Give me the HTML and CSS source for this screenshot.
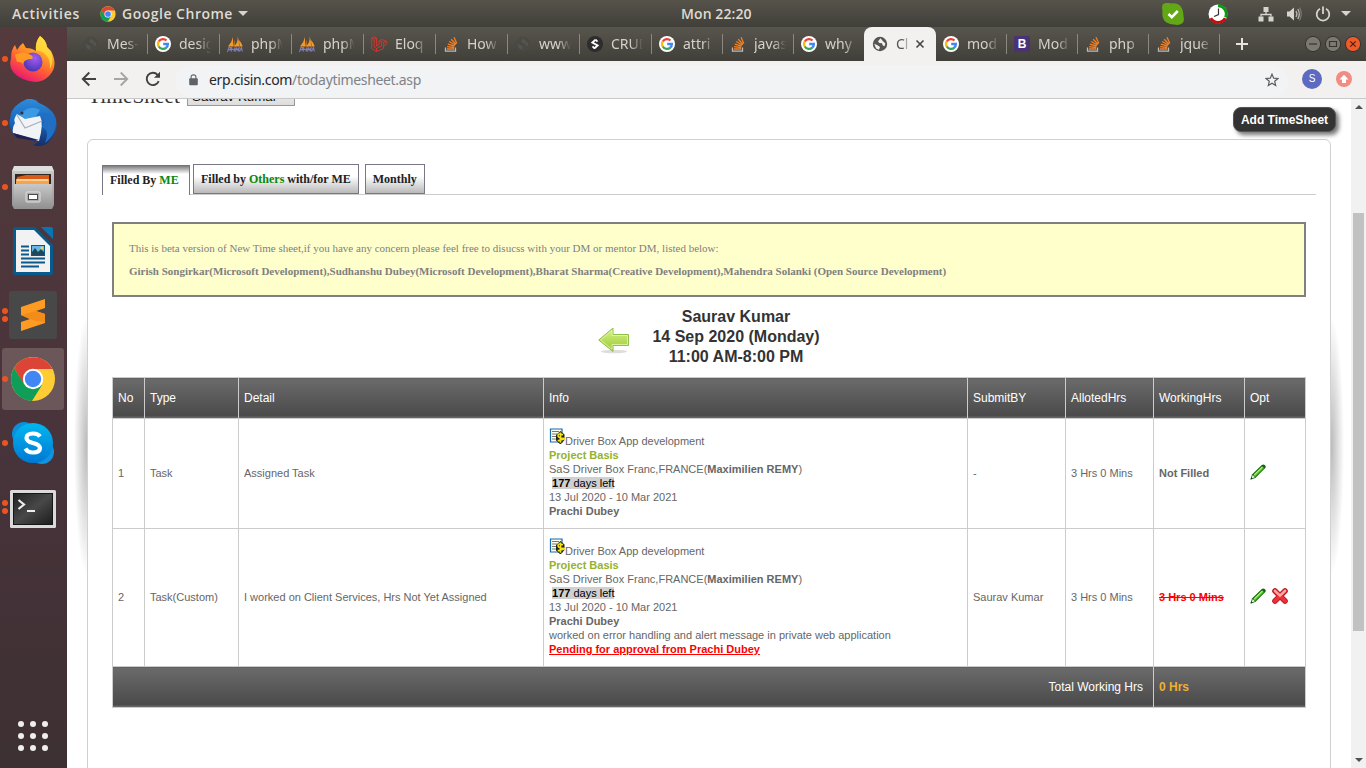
FILE: index.html
```html
<!DOCTYPE html>
<html lang="en">
<head>
<meta charset="utf-8">
<title>TimeSheet</title>
<link rel="stylesheet" href="styles.css">
</head>
<body>
<svg class="defs" width="0" height="0">
  <defs>
    <linearGradient id="fxBody" x1=".8" y1="0" x2=".3" y2="1"><stop offset="0" stop-color="#fff44f"/><stop offset=".35" stop-color="#ffa125"/><stop offset=".65" stop-color="#ff5b36"/><stop offset="1" stop-color="#e8117a"/></linearGradient>
    <radialGradient id="fxCore" cx=".6" cy=".3" r=".7"><stop offset="0" stop-color="#a35cf5"/><stop offset="1" stop-color="#4d35b5"/></radialGradient>
    <linearGradient id="tbBody" x1="0" y1="0" x2="0" y2="1"><stop offset="0" stop-color="#2f8bd8"/><stop offset=".5" stop-color="#1866bd"/><stop offset="1" stop-color="#172c66"/></linearGradient>
    <linearGradient id="steel" x1="0" y1="0" x2="0" y2="1"><stop offset="0" stop-color="#c8c8c8"/><stop offset="1" stop-color="#929292"/></linearGradient>
    <linearGradient id="skypeFill" x1="0" y1="0" x2="0" y2="1"><stop offset="0" stop-color="#00b7f0"/><stop offset="1" stop-color="#0078d4"/></linearGradient>
    <linearGradient id="termFill" x1="0" y1="0" x2="1" y2="1"><stop offset="0" stop-color="#222"/><stop offset=".5" stop-color="#484848"/><stop offset="1" stop-color="#1c1c1c"/></linearGradient>
    <linearGradient id="arrowFill" x1="0" y1="0" x2="0" y2="1"><stop offset="0" stop-color="#d9f08e"/><stop offset="1" stop-color="#98cc2c"/></linearGradient>
    <symbol id="google" viewBox="0 0 16 16"><circle cx="8" cy="8" r="8" fill="#fff"/><g fill="none" stroke-width="2.3"><path d="M11.5 4.5A4.9 4.9 0 0 0 3.8 5.5" stroke="#ea4335"/><path d="M3.8 5.4A4.9 4.9 0 0 0 3.8 10.6" stroke="#fbbc05"/><path d="M3.8 10.5A4.9 4.9 0 0 0 11.3 11.6" stroke="#34a853"/><path d="M11.2 11.7A4.9 4.9 0 0 0 12.9 8H8.2" stroke="#4285f4"/></g></symbol>
    <symbol id="pma" viewBox="0 0 16 16"><path d="M6 1Q5 6 1 10.500H6ZM10.500 0Q11.500 6 7 10.500H12Q12.500 5 10.500 0ZM12 4Q15.500 8 15.500 10.500H12.500Z" fill="#f59a2a"/><path d="M5.800 10.500Q7 6 7.500 3.500L8 10.500Z" fill="#d27a18"/><path d="M.5 15.800L2 11.500H4L3.300 13.600H1.500M5 11.500L4 15.500M5 13.500H7M8 11.500L7 15.500M8.500 15.500L9.300 12 10.300 14 12 12 11.500 15.500M12.500 15.500L14.500 11.500 15.300 15.500" fill="none" stroke="#807fb0" stroke-width="1.200"/></symbol>
    <symbol id="so" viewBox="0 0 16 16"><path d="M2.500 11.500V15.200H12.500V11.500" fill="none" stroke="#bcbbbb" stroke-width="1.300"/><path d="M4 13H11.200M4.100 10.700L11.200 11.500M4.800 8.200L11.600 10M6.200 5.500L12.300 9M8.200 3.200L13 8.300M11 1.300L13.800 7.400" stroke="#f48024" stroke-width="1.300"/></symbol>
    <symbol id="globe" viewBox="0 0 16 16"><circle cx="8" cy="8" r="7.200" fill="currentColor"/><path d="M8.500 2.300L6 5.200 7.300 7 10 7.300 10.800 9.500 12.500 10.300 13.400 7.400 11 5.300ZM2.200 7.800L5.500 9.300 8 11 7 13.700 4.100 12.600Z" fill="var(--land)"/></symbol>
    <symbol id="chrome" viewBox="0 0 46 46"><circle cx="23" cy="23" r="22" fill="#fc3"/><path d="M4 12A22 22 0 0 1 42.500 13H23L13.500 28Z" fill="#db4437"/><path d="M4 12A22 22 0 0 0 22 45L32 29 23 33 14 28Z" fill="#0f9d58"/><circle cx="23" cy="23" r="10.200" fill="#fff"/><circle cx="23" cy="23" r="8.200" fill="#4285f4"/></symbol>
    <symbol id="pencil" viewBox="0 0 16 16"><path d="M.5 15.500L2 10.500 11.800 1Q13.500-.2 15 1.300T15 4.300L5.300 14Z" fill="#15650f"/><path d="M3.500 11L12.200 2.400 14 4 5.200 12.700Z" fill="#51c92a"/><path d="M3.800 10.500L12 2.500 12.900 3.300 4.500 11.500Z" fill="#b4ef80"/><path d="M1.500 14.500L2.700 11 5 13.300Z" fill="#e9f3dd"/><path d="M.5 15.500L1.300 13.200 2.800 14.700Z" fill="#0b4208"/></symbol>
    <symbol id="cross" viewBox="0 0 16 16"><path d="M3 3L13 13M13 3L3 13" stroke="#b51c24" stroke-width="5.600" stroke-linecap="round"/><path d="M3 3L13 13M13 3L3 13" stroke="#ef3037" stroke-width="3.800" stroke-linecap="round"/><path d="M3 2.800L8 7.500 13 2.800" fill="none" stroke="#ffa9a6" stroke-width="2.400" stroke-linecap="round"/></symbol>
    <symbol id="invoice" viewBox="0 0 16 16"><path d="M1.500 1H13V14H1.500Z" fill="#fffdf0" stroke="#1768aa" stroke-width="1.200"/><path d="M3 3.500H10M3 6H8M3 8.500H7M3 11H7" stroke="#777"/><path d="M11.500 3L15.500 6.500V12L11.500 16.500 7 12.500V7Z" fill="#222"/><path d="M14 6.700Q9 5 9 7.500T14 10.300 8.700 12.700M11.500 4.500V14.800" fill="none" stroke="#f6e414" stroke-width="1.600"/></symbol>
  </defs>
</svg>

<header class="topbar">
  <span class="activities">Activities</span>
  <svg class="topbar-chrome" width="16" height="16"><use href="#chrome"/></svg>
  <span class="app-name">Google Chrome</span>
  <i class="caret"></i>
  <span class="clock">Mon 22:20</span>
  <div class="tray">
    <svg width="22" height="22" viewBox="0 0 22 22"><path d="M1 1Q5-1 9 .5Q21-1 21.500 13Q23 20 19 21Q16 22.500 12 21.500Q-1 21 .5 8Q-.5 3 1 1Z" fill="#62a715"/><path d="M6.500 11L9.800 14.200 15.800 8" fill="none" stroke="#fff" stroke-width="2.600"/></svg>
    <svg class="tray-time" width="20" height="20" viewBox="0 0 20 20"><circle cx="10" cy="10" r="9.500" fill="#fff"/><path d="M10 1.800A8.200 8.200 0 0 1 17.600 13.300" fill="none" stroke="#0b9b12" stroke-width="3"/><path d="M17.200 14.100A8.200 8.200 0 0 1 2.800 14.100" fill="none" stroke="#c80d0d" stroke-width="3"/><path d="M10.500 4.500V10.500L6 12.500" fill="none" stroke="#333" stroke-width="1.200"/></svg>
    <svg class="tray-net" width="16" height="16" viewBox="0 0 16 16" fill="#d6d4ce"><path d="M5.500 1H10.500V6H5.500ZM.5 10.500H5.500V15.500H.5ZM10.500 10.500H15.500V15.500H10.500Z"/><path d="M8 6V8.500M3 10.500V8.500H13V10.500" fill="none" stroke="#d6d4ce" stroke-width="1.300"/></svg>
    <svg class="tray-vol" width="16" height="16" viewBox="0 0 16 16"><path d="M1 5.500H3.500L8 1.500V14.500L3.500 10.500H1Z" fill="#d6d4ce"/><path d="M10 5Q11.800 8 10 11M11.800 3Q14.800 8 11.800 13" fill="none" stroke="#b9b7b0" stroke-width="1.300"/><path d="M13.500 1.500Q17 8 13.500 14.500" fill="none" stroke="#7b7972" stroke-width="1.200"/></svg>
    <svg class="tray-power" width="16" height="16" viewBox="0 0 16 16"><path d="M5 2.700A6.300 6.300 0 1 0 11 2.700M8 .5V8" fill="none" stroke="#d6d4ce" stroke-width="1.800"/></svg>
    <i class="caret tray-caret"></i>
  </div>
</header>

<div class="desktop">
  <nav class="dock">
    <div class="app"><span class="dots"><i></i></span>
      <svg width="48" height="48" viewBox="0 0 48 48"><path d="M31 1Q37 5 38 12L42 16Q50 31 40 41T14 44T2 24Q2 14 6 10L8 15Q10 11 14 8L17 13Q23 13 27 16Q26 7 31 1Z" fill="url(#fxBody)"/><path d="M31 1Q37 5 38 12Q47 22 41 34Q42 24 36 19T27 16Q26 7 31 1Z" fill="#ffdc3e" opacity=".8"/><circle cx="24" cy="27" r="9.500" fill="url(#fxCore)"/><path d="M6 20Q14 15 22 20Q25 22 23 24Q15 24 14 29Q11 26 8 27Z" fill="#ff9a22"/></svg></div>
    <div class="app"><span class="dots"><i></i></span>
      <svg width="48" height="48" viewBox="0 0 48 48"><path d="M18 0Q26-1 30 4Q41 8 46 17Q51 32 40 43Q33 49 24 46L29 43 6 38Q-1 28 1 20Q2 10 8 6Q13 2 18 0Z" fill="url(#tbBody)"/><path d="M12 15Q20 5 31 11L24 22 9 19Z" fill="#3b9ae4"/><path d="M6 24Q4 20 8 15L16 20 31 17Q35 24 30 42L4 34Q3 29 6 24Z" fill="#f2f3f7"/><path d="M8 16L16 29 33 22" fill="none" stroke="#a9afba" stroke-width="1.200"/><path d="M31 14Q41 13 47 20Q48 35 36 44Q41 31 33 28Q38 20 31 14Z" fill="#216fc2"/><path d="M4 34L30 41 22 41 8 39Z" fill="#222050"/><circle cx="13" cy="14" r="1.500" fill="#432c25"/></svg></div>
    <div class="app"><span class="dots"><i></i></span>
      <svg width="48" height="48" viewBox="0 0 48 48"><path d="M5 3H43L45 8V42H3V8Z" fill="#dedede"/><path d="M3 8H45V42L43 46H5L3 42Z" fill="url(#steel)"/><path d="M6 11H42V22H6Z" fill="#302824"/><path d="M8 14L17 12H40V22H7Z" fill="#d85b18"/><path d="M7 16H40V22H7Z" fill="#f7a34a"/><path d="M8 17H39" stroke="#ffe1ae" stroke-width="1.500"/><path d="M5 21H43V45H5Z" fill="url(#steel)"/><rect x="17" y="29" width="14" height="10" rx="1" fill="#ababab" stroke="#e2e2e2"/><rect x="19.500" y="31.500" width="9" height="5" fill="#fff" stroke="#4b4b4b"/></svg></div>
    <div class="app"><svg width="48" height="48" viewBox="0 0 48 48"><path d="M6 0H26L44 18V46Q44 48 42 48H6Q4 48 4 46V2Q4 0 6 0Z" fill="#065a8c"/><path d="M32 0H42Q44 0 44 2V12Z" fill="#0875b5"/><path d="M7 3H25L41 19V45H7Z" fill="#f2f2f2"/><path d="M12 19.500H20M12 23.500H20M12 27.500H20M12 31.500H36M12 35.500H36M12 39.500H30" stroke="#0b5a8b" stroke-width="2"/><rect x="22.500" y="18.500" width="13" height="10" fill="#69b7e3" stroke="#065a8c"/><path d="M23 28V25L26 21 29 25 32 22 35 25V28Z" fill="#20475c"/><circle cx="33" cy="21" r="1.500" fill="#f7d154"/></svg></div>
    <div class="app"><span class="dots"><i></i><i></i></span>
      <svg width="48" height="48" viewBox="0 0 48 48"><rect width="48" height="48" rx="3" fill="#484848"/><path d="M12 24V16L36 8V17L27 20 36 23V32L12 40V31L21 28Z" fill="#ff9b22"/><path d="M12 24L21 28 27 30 36 31V23L27 20Z" fill="#f48c19"/></svg></div>
    <div class="app app-active"><span class="dots"><i></i></span><svg width="48" height="46"><use href="#chrome"/></svg></div>
    <div class="app"><span class="dots"><i></i></span>
      <svg width="48" height="48" viewBox="0 0 48 48"><circle cx="15" cy="15" r="12" fill="#0a8fdc"/><circle cx="33" cy="33" r="12" fill="#1193df"/><circle cx="24" cy="24" r="20" fill="url(#skypeFill)"/><path d="M31 17.500Q29 14.500 24 14.500Q17.500 14.500 17.500 19Q17.500 22.500 24 24T31 29Q31 33.500 24 33.500Q18.500 33.500 16.500 29.500" fill="none" stroke="#fff" stroke-width="4.200"/></svg></div>
    <div class="app"><span class="dots"><i></i><i></i></span>
      <svg width="48" height="48" viewBox="0 0 48 48"><rect x="1" y="7" width="46" height="38" rx="1.500" fill="#dadada"/><rect x="4.500" y="10.500" width="39" height="31" fill="url(#termFill)" stroke="#161616"/><path d="M9.500 17L15 21.500 9.500 26M18 28H26" fill="none" stroke="#eee" stroke-width="2.200"/></svg></div>
    <div class="launcher"><i></i><i></i><i></i><i></i><i></i><i></i><i></i><i></i><i></i></div>
  </nav>

  <div class="browser">
    <div class="tabstrip">
      <div class="tab tab-first"><svg class="dim" width="16" height="16"><use href="#globe"/></svg><span>Mes-</span></div>
      <div class="tab"><svg width="16" height="16"><use href="#google"/></svg><span>desig</span></div>
      <div class="tab"><svg width="16" height="16"><use href="#pma"/></svg><span>phpM</span></div>
      <div class="tab"><svg width="16" height="16"><use href="#pma"/></svg><span>phpM</span></div>
      <div class="tab"><svg width="16" height="16" viewBox="0 0 16 16" fill="none" stroke="#d8362b" stroke-width=".9"><path d="M.7 2L3.200.7 5.500 2V10L8 8.700V5L10.700 3.500 15.300 5V8.500L12.500 10V12.700L5.500 15.500.7 12.700V2L3.200 3.300V11L5.500 12.500 10.500 10V6.700L8 5M5.500 2L3.200 3.300M15.300 5L12.700 6.500 10.500 5M12.700 6.500V9.800M5.500 12.500V15.500"/></svg><span>Eloq</span></div>
      <div class="tab"><svg width="16" height="16"><use href="#so"/></svg><span>How</span></div>
      <div class="tab"><svg class="dim" width="16" height="16"><use href="#globe"/></svg><span>www</span></div>
      <div class="tab"><svg width="16" height="16" viewBox="0 0 16 16"><circle cx="8" cy="8" r="8" fill="#2d2d2d"/><path d="M8.500 3.700L5.300 6.500 10.700 9.500 7.500 12.300M8.500 3.700L10.500 5.600M7.500 12.300L5.500 10.400" fill="none" stroke="#fff" stroke-width="1.800"/></svg><span>CRUD</span></div>
      <div class="tab tab-narrow"><svg width="16" height="16"><use href="#google"/></svg><span>attri</span></div>
      <div class="tab tab-narrow"><svg width="16" height="16"><use href="#so"/></svg><span>javas</span></div>
      <div class="tab tab-before"><svg width="16" height="16"><use href="#google"/></svg><span>why</span></div>
      <div class="tab tab-current"><svg width="16" height="16"><use href="#globe"/></svg><span>Cl</span><svg class="close" width="10" height="10" viewBox="0 0 10 10"><path d="M1.500 1.500L8.500 8.500M8.500 1.500L1.500 8.500" stroke="#444" stroke-width="1.600"/></svg></div>
      <div class="tab tab-narrow"><svg width="16" height="16"><use href="#google"/></svg><span>mod</span></div>
      <div class="tab tab-narrow"><b class="bootstrap">B</b><span>Mod</span></div>
      <div class="tab tab-narrow"><svg width="16" height="16"><use href="#so"/></svg><span>php</span></div>
      <div class="tab tab-narrow"><svg width="16" height="16"><use href="#so"/></svg><span>jque</span></div>
      <svg class="new-tab" width="12" height="12" viewBox="0 0 12 12"><path d="M6 0V12M0 6H12" stroke="#e6e4df" stroke-width="2"/></svg>
      <div class="window-buttons">
        <svg width="16" height="16" viewBox="0 0 16 16"><circle cx="8" cy="8" r="7.600" fill="#7b7970" stroke="#35342f"/><path d="M4 8H12" stroke="#35342f" stroke-width="1.200"/></svg>
        <svg width="16" height="16" viewBox="0 0 16 16"><circle cx="8" cy="8" r="7.600" fill="#7b7970" stroke="#35342f"/><path d="M4.500 5.500H11.500V10.500H4.500Z" fill="none" stroke="#35342f" stroke-width="1.200"/></svg>
        <svg width="16" height="16" viewBox="0 0 16 16"><circle cx="8" cy="8" r="7.600" fill="#ee5a2a" stroke="#35342f"/><path d="M5.300 5.300L10.700 10.700M10.700 5.300L5.300 10.700" stroke="#4c2010" stroke-width="1.200"/></svg>
      </div>
    </div>

    <div class="toolbar">
      <svg width="16" height="16" viewBox="0 0 16 16"><path d="M15 8H2M8.300 1.500L1.800 8L8.300 14.500" fill="none" stroke="#414141" stroke-width="1.900"/></svg>
      <svg class="forward" width="16" height="16" viewBox="0 0 16 16"><path d="M1 8H14M7.700 1.500L14.200 8L7.700 14.500" fill="none" stroke="#a5a5a4" stroke-width="1.900"/></svg>
      <svg class="reload" width="16" height="16" viewBox="0 0 16 16"><path d="M13.700 10.200A6.200 6.200 0 1 1 12.600 3.800" fill="none" stroke="#414141" stroke-width="1.900"/><path d="M15 .8V6.800H9Z" fill="#414141"/></svg>
      <div class="omnibox">
        <svg width="9" height="12" viewBox="0 0 10 14"><path d="M1 5H9Q10 5 10 6V12Q10 13 9 13H1Q0 13 0 12V6Q0 5 1 5Z" fill="#5f6368"/><path d="M2.200 5.500V3.500Q2.200 1 5 1T7.800 3.500V5.500" fill="none" stroke="#5f6368" stroke-width="1.300"/></svg>
        <span class="url"><b>erp.cisin.com</b>/todaytimesheet.asp</span>
        <svg class="star" width="14" height="14" viewBox="0 0 14 14"><path d="M7 1.200L8.700 5.200 13 5.500 9.700 8.300 10.700 12.500 7 10.200 3.300 12.500 4.300 8.300 1 5.500 5.300 5.200Z" fill="none" stroke="#5a5d61" stroke-width="1.200"/></svg>
      </div>
      <span class="avatar">S</span>
      <svg class="update" width="16" height="16" viewBox="0 0 16 16"><circle cx="8" cy="8" r="8" fill="#f28b82"/><path d="M8 3.700L12.500 8.500H10V12H6V8.500H3.500Z" fill="#fff"/></svg>
    </div>

    <div class="viewport">
      <main class="page">
        <div class="page-head">
          <h1>TimeSheet</h1>
          <div class="person-select">Saurav Kumar</div>
          <button class="add-button">Add TimeSheet</button>
        </div>
        <section class="panel">
          <div class="filters">
            <a class="filter filter-on">Filled By <em>ME</em></a>
            <a class="filter">Filled by <em>Others</em> with/for ME</a>
            <a class="filter filter-last">Monthly</a>
          </div>
          <div class="notice">
            <p>This is beta version of New Time sheet,if you have any concern please feel free to disucss with your DM or mentor DM, listed below:</p>
            <p><b>Girish Songirkar(Microsoft Development),Sudhanshu Dubey(Microsoft Development),Bharat Sharma(Creative Development),Mahendra Solanki (Open Source Development)</b></p>
          </div>
          <div class="day">
            <svg width="32" height="28" viewBox="0 0 32 28"><ellipse cx="16" cy="24.500" rx="13" ry="1.800" fill="#ddd"/><path d="M.7 13L15 1V7.500H30.500V18.500H15V24.500Z" fill="url(#arrowFill)" stroke="#8fc04a"/><path d="M2.500 13L14 3.500V8.500H29.500V17.500H14V22.300Z" fill="none" stroke="#e3f5b4" stroke-width=".8"/></svg>
            <div class="day-text">Saurav Kumar<br>14 Sep 2020 (Monday)<br>11:00 AM-8:00 PM</div>
          </div>
          <table class="sheet">
            <colgroup><col class="c-no"><col class="c-type"><col class="c-detail"><col class="c-info"><col class="c-submit"><col class="c-alloted"><col class="c-working"><col class="c-opt"></colgroup>
            <thead><tr><th>No</th><th>Type</th><th>Detail</th><th>Info</th><th>SubmitBY</th><th>AllotedHrs</th><th>WorkingHrs</th><th>Opt</th></tr></thead>
            <tbody>
              <tr class="row-a">
                <td>1</td><td>Task</td><td>Assigned Task</td>
                <td class="info">
                  <div class="project"><svg width="16" height="16"><use href="#invoice"/></svg>Driver Box App development</div>
                  <div class="basis">Project Basis</div>
                  <div>SaS Driver Box Franc,FRANCE(<b>Maximilien REMY</b>)</div>
                  <div>&nbsp;<span class="left"><b>177</b> days left</span></div>
                  <div>13 Jul 2020 - 10 Mar 2021</div>
                  <div><b>Prachi Dubey</b></div>
                </td>
                <td>-</td><td>3 Hrs 0 Mins</td><td><b>Not Filled</b></td>
                <td class="opts-cell"><div class="opts"><svg width="16" height="16"><use href="#pencil"/></svg></div></td>
              </tr>
              <tr class="row-b">
                <td>2</td><td>Task(Custom)</td><td>I worked on Client Services, Hrs Not Yet Assigned</td>
                <td class="info">
                  <div class="project"><svg width="16" height="16"><use href="#invoice"/></svg>Driver Box App development</div>
                  <div class="basis">Project Basis</div>
                  <div>SaS Driver Box Franc,FRANCE(<b>Maximilien REMY</b>)</div>
                  <div>&nbsp;<span class="left"><b>177</b> days left</span></div>
                  <div>13 Jul 2020 - 10 Mar 2021</div>
                  <div><b>Prachi Dubey</b></div>
                  <div>worked on error handling and alert message in private web application</div>
                  <div class="pending">Pending for approval from Prachi Dubey</div>
                </td>
                <td>Saurav Kumar</td><td>3 Hrs 0 Mins</td><td class="struck">3 Hrs 0 Mins</td>
                <td class="opts-cell"><div class="opts"><svg width="16" height="16"><use href="#pencil"/></svg><svg width="16" height="16"><use href="#cross"/></svg></div></td>
              </tr>
            </tbody>
            <tfoot><tr><td colspan="6" class="total">Total Working Hrs</td><td colspan="2" class="sum">0 Hrs</td></tr></tfoot>
          </table>
        </section>
      </main>
      <div class="scrollbar"><i class="up"></i><span class="thumb"></span><i class="down"></i></div>
    </div>
  </div>
</div>
</body>
</html>
```
FILE: styles.css
```css
* { box-sizing: border-box; }
body { margin: 0; width: 1366px; height: 768px; overflow: hidden; font-family: "Liberation Sans", Arial, sans-serif; background: #fff; }
svg { display: block; flex: none; }
.defs { position: absolute; }

.topbar { display: flex; align-items: center; height: 27px; padding-left: 12px; background: linear-gradient(#56534b, #403f39); color: #dfdbd2; font: 600 14px/27px "Open Sans", "Noto Sans", sans-serif; }
.activities { width: 88px; letter-spacing: .65px; }
.topbar-chrome { margin-right: 6px; }
.app-name { width: 116px; letter-spacing: .5px; white-space: nowrap; }
.caret { border: 5px solid transparent; border-top-color: #d6d4ce; border-bottom: 0; }
.clock { margin-left: 433px; width: 72px; font-size: 14px; letter-spacing: .1px; white-space: nowrap; }
.tray { display: flex; align-items: center; margin-left: 409px; }
.tray-time { margin-left: 24px; }
.tray-net { margin-left: 30px; }
.tray-vol { margin-left: 12px; }
.tray-power { margin-left: 13px; }
.tray-caret { margin-left: 10px; }

.desktop { display: flex; height: 741px; }
.dock { display: flex; flex-direction: column; flex: none; width: 67px; padding: 1px 2px 0; background: linear-gradient(#543a3d, #47333a 60%, #3d3032); }
.app { display: flex; align-items: center; justify-content: center; flex: none; width: 62px; height: 62px; margin-bottom: 2px; border-radius: 3px; }
.app-active { background: #6b5659; }
.dots { display: flex; flex-direction: column; gap: 2px; width: 6px; margin-left: -7px; margin-right: 1px; }
.dots i { width: 6px; height: 6px; border-radius: 50%; background: #e95420; }
.launcher { display: grid; grid-template-columns: repeat(3, 6px); gap: 6px; margin: auto 0 17px 16px; }
.launcher i { width: 6px; height: 6px; border-radius: 50%; background: #f1efee; }

.browser { display: flex; flex-direction: column; flex: 1; min-width: 0; }
.tabstrip { display: flex; flex: none; height: 34px; background: linear-gradient(#58554d, #403f39); color: #d5d2ca; font: 14px/34px "Noto Sans", "Open Sans", sans-serif; }
.tab { display: flex; align-items: center; flex: none; width: 72px; padding: 0 7px; background: linear-gradient(#8a8880, #8a8880) right 7px / 1px 20px no-repeat; }
.tab span { flex: none; width: 32px; margin-left: 8px; overflow: hidden; white-space: nowrap; -webkit-mask-image: linear-gradient(90deg, #000 60%, transparent); mask-image: linear-gradient(90deg, #000 60%, transparent); }
.tab-first { width: 81px; padding-left: 16px; }
.tab-narrow { width: 71px; }
.tab-before { width: 70px; background: none; }
.tab-current { width: 72px; padding-left: 8px; border-radius: 8px 8px 0 0; background: #f2f1f0; color: #555; --land: #f2f1f0; }
.tab-current span { width: 13px; }
.close { margin-left: 6px; }
.dim { color: #494945; --land: #56544d; }
.bootstrap { width: 16px; height: 16px; border-radius: 2px; background: #4b3176; color: #fff; font: bold 12px/16px "Liberation Sans", sans-serif; text-align: center; }
.new-tab { margin: 11px 0 0 16px; }
.window-buttons { display: flex; gap: 4px; margin: 9px 0 0 57px; }

.toolbar { display: flex; align-items: center; flex: none; height: 38px; padding: 0 0 2px 14px; border-bottom: 1px solid #c9c9ca; background: #f2f1f0; }
.forward { margin-left: 16px; }
.reload { margin-left: 16px; }
.omnibox { display: flex; align-items: center; align-self: stretch; flex: none; width: 1113px; margin: 4px 0 -1px 14px; padding: 0 9px 3px 14px; border-radius: 16px; background: #f1f3f4; }
.url { margin-left: 11px; color: #7f8388; font: 14px/20px "Noto Sans", sans-serif; letter-spacing: -.33px; }
.url b { color: #25272a; font-weight: 400; }
.star { margin-left: auto; }
.avatar { width: 20px; height: 20px; margin-left: 14px; border-radius: 50%; background: #5c6bc0; color: #fff; font-size: 10px; line-height: 20px; text-align: center; }
.update { margin-left: 14px; }

.viewport { display: flex; flex: 1; min-height: 0; }
.page { flex: 1; min-width: 0; padding: 0 20px; overflow: hidden; background: radial-gradient(ellipse 13px 130px at 20px 347px, rgba(90,90,90,.42), transparent), radial-gradient(ellipse 13px 130px at 1264px 347px, rgba(90,90,90,.42), transparent), #fff; }
.page-head { display: flex; height: 40px; padding-left: 1px; }
.page-head h1 { flex: none; width: 99px; margin: -15px 0 0; color: #333; font: 400 21.400px/24px "Liberation Serif", serif; }
.person-select { width: 108px; height: 22px; margin-top: -15px; padding-left: 4px; border: 1px solid #999; background: linear-gradient(#f6f6f6, #ddd); color: #111; font-size: 13.33px; line-height: 23px; }
.add-button { width: 103px; height: 25px; margin: 8px -5px 0 auto; padding: 0; border: 1px solid #555; border-radius: 8px; background: #333; color: #fff; font: bold 12px/22px "Liberation Sans", sans-serif; box-shadow: 3px 3px 4px #777; white-space: nowrap; }
.panel { width: 1244px; height: 680px; padding: 24px 14px 0; border: 1px solid #d0d0d0; border-radius: 6px; background: #fff; }
.filters { display: flex; height: 31px; border-bottom: 1px solid #ccc; }
.filter { height: 30px; margin-right: 6px; padding: 0 7px; border: 1px solid #778; background: linear-gradient(#fff 40%, #b9b9b9); color: #222; font: bold 12px/28px "Liberation Serif", serif; white-space: nowrap; }
.filter em { color: #0a870a; font-style: normal; }
.filter-on { width: 88px; margin: 1px 3px 0 0; border-top: 0; border-bottom: 0; background: linear-gradient(#6c6c70, #fff 9px); line-height: 31px; }
.notice { width: 1194px; height: 75px; margin: 27px 0 0 10px; padding: 13px 15px; border: 2px solid #808080; background: #ffc; color: #808080; font: 11px/23px "Liberation Serif", serif; white-space: nowrap; }
.notice p { margin: 0; }
.day { display: flex; justify-content: center; width: 1194px; height: 80px; margin-left: 10px; padding-top: 10px; }
.day > svg { margin: 20px 22px 0 0; }
.day-text { color: #333; font: bold 16px/20px "Liberation Sans", sans-serif; text-align: center; }

.sheet { width: 1193px; margin-left: 10px; border-collapse: collapse; table-layout: fixed; color: #666; font-size: 11px; line-height: 14px; }
.sheet th, .sheet td { padding: 0 5px; border: 1px solid #ccc; text-align: left; vertical-align: middle; }
.sheet tbody td { padding-bottom: 2px; }
.sheet tbody td.info, .sheet tbody td.opts-cell { padding-bottom: 0; }
.sheet thead tr, .sheet tfoot tr { height: 41px; }
.sheet th, .sheet tfoot td { background: linear-gradient(transparent 38px, #666 38px), linear-gradient(#6b6b6b, #484848); color: #fff; font-size: 12px; font-weight: 400; }
.c-no { width: 32px; } .c-type { width: 94px; } .c-detail { width: 305px; } .c-info { width: 424px; }
.c-submit { width: 98px; } .c-alloted { width: 88px; } .c-working { width: 91px; } .c-opt { width: 61px; }
.row-a { height: 110px; } .row-b { height: 138px; }
.project { display: flex; height: 19px; line-height: 24px; }
.project svg { margin-top: -1px; }
.basis { color: #93b32a; font-weight: bold; }
.left { background: #d0d0d0; color: #000; }
.pending { color: #f00; font-weight: bold; text-decoration: underline; }
.struck { color: #f00; font-weight: bold; text-decoration: line-through; }
.opts { display: flex; gap: 6px; margin-top: -3px; }
.sheet tfoot .total { padding-right: 10px; text-align: right; }
.sheet tfoot .sum { color: #f0b030; font-weight: bold; }

.scrollbar { display: flex; flex-direction: column; align-items: center; width: 15px; background: #f1f1f1; }
.up { margin-top: 6px; border: 4px solid transparent; border-bottom-color: #505050; border-top: 0; }
.thumb { width: 11px; height: 418px; margin-top: 104px; background: #c1c1c1; }
.down { margin-top: 127px; border: 4px solid transparent; border-top-color: #505050; border-bottom: 0; }
```
